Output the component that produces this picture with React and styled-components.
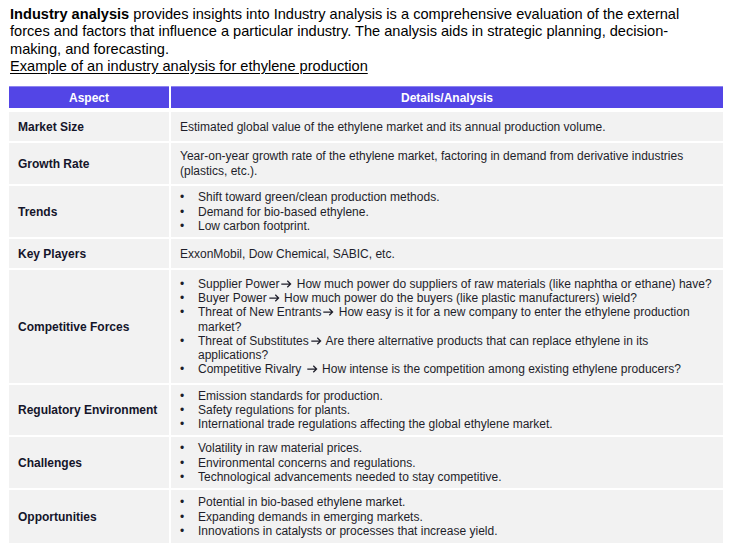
import React from "react";
import styled, { createGlobalStyle } from "styled-components";

const Global = createGlobalStyle`
  html, body { margin: 0; padding: 0; background: #ffffff; }
  body { font-family: "Liberation Sans", Arial, sans-serif; }
`;

const Page = styled.div`
  width: 729px;
  height: 545px;
  padding: 6px 6px 0 9px;
  box-sizing: border-box;
  overflow: hidden;
`;

const Intro = styled.p`
  margin: 0 0 0 1px;
  font-size: 14.6px;
  line-height: 17.3px;
  color: #000;
`;

const Strong = styled.b`
  font-weight: 700;
`;

const Caption = styled.span`
  text-decoration: underline;
  text-underline-offset: 2px;
`;

const Table = styled.div`
  margin-top: 11px;
  width: 714px;
  display: flex;
  flex-direction: column;
  gap: 2px;
`;

const Row = styled.div`
  display: grid;
  grid-template-columns: 160px 552px;
  column-gap: 2px;
  height: ${(p) => p.$h}px;
  margin-bottom: ${(p) => (p.$head ? 2 : 0)}px;
`;

const HeadCell = styled.div`
  background: #5345e6;
  border-top: 1px solid #8e84ef;
  color: #ffffff;
  font-weight: 700;
  font-size: 12px;
  display: flex;
  align-items: center;
  justify-content: center;
`;

const LabelCell = styled.div`
  background: #f2f2f2;
  display: flex;
  align-items: center;
  padding-left: 9px;
  font-size: 12px;
  font-weight: 700;
  color: #15152a;
`;

const BodyCell = styled.div`
  background: #f2f2f2;
  display: flex;
  flex-direction: column;
  justify-content: center;
  padding-left: 9px;
  font-size: 12px;
  line-height: 14.2px;
  color: #1e1e2a;
`;

const Item = styled.div`
  display: flex;
`;

const Dot = styled.span`
  width: 18px;
  flex: none;
`;

const Lines = styled.div`
  display: flex;
  flex-direction: column;
`;

const Text = styled.span`
  white-space: nowrap;
`;

const ArrowSvg = styled.svg`
  width: 11px;
  height: 8px;
  margin: 0 1px 0 2px;
  vertical-align: 0px;
`;

const A = () => (
  <ArrowSvg viewBox="0 0 11 8" aria-hidden="true">
    <path d="M0.3 4 H9.6 M6.3 0.7 L9.6 4 L6.3 7.3" fill="none" stroke="currentColor" strokeWidth="1.25" />
  </ArrowSvg>
);

const rows = [
  { label: "Market Size", h: 29, text: ["Estimated global value of the ethylene market and its annual production volume."] },
  {
    label: "Growth Rate",
    h: 41,
    text: ["Year-on-year growth rate of the ethylene market, factoring in demand from derivative industries", "(plastics, etc.)."],
  },
  {
    label: "Trends",
    h: 51,
    bullets: [["Shift toward green/clean production methods."], ["Demand for bio-based ethylene."], ["Low carbon footprint."]],
  },
  { label: "Key Players", h: 29, text: ["ExxonMobil,  Dow Chemical, SABIC, etc."] },
  {
    label: "Competitive Forces",
    h: 113,
    bullets: [
      [<>Supplier Power<A /> How much power do suppliers of raw materials (like naphtha or ethane) have?</>],
      [<>Buyer Power<A /> How much power do the buyers (like plastic manufacturers) wield?</>],
      [<>Threat of New Entrants<A /> How easy is it for a new company to enter the ethylene production</>, "market?"],
      [<>Threat of Substitutes<A /> Are there alternative products that can replace ethylene in its</>, "applications?"],
      [<>Competitive Rivalry <A /> How intense is the competition among existing ethylene producers?</>],
    ],
  },
  {
    label: "Regulatory  Environment",
    h: 50,
    bullets: [
      ["Emission standards for production."],
      ["Safety regulations for plants."],
      ["International trade regulations affecting the global ethylene market."],
    ],
  },
  {
    label: "Challenges",
    h: 51,
    bullets: [
      ["Volatility in raw material prices."],
      ["Environmental concerns and regulations."],
      ["Technological advancements needed to stay competitive."],
    ],
  },
  {
    label: "Opportunities",
    h: 53,
    bullets: [
      ["Potential in bio-based ethylene market."],
      ["Expanding demands in emerging markets."],
      ["Innovations in catalysts or processes that increase yield."],
    ],
  },
];

export default function App() {
  return (
    <>
      <Global />
      <Page>
        <Intro>
          <Strong>Industry analysis</Strong> provides insights into Industry analysis is a comprehensive evaluation of the external
          <br />
          forces and factors that influence a particular industry. The analysis aids in strategic planning, decision-
          <br />
          making, and forecasting.
          <br />
          <Caption>Example of an industry analysis for ethylene production</Caption>
        </Intro>
        <Table>
          <Row $h={22} $head>
            <HeadCell>Aspect</HeadCell>
            <HeadCell>Details/Analysis</HeadCell>
          </Row>
          {rows.map((r) => (
            <Row key={r.label} $h={r.h}>
              <LabelCell>{r.label}</LabelCell>
              <BodyCell>
                {r.text && r.text.map((l, i) => <Text key={i}>{l}</Text>)}
                {r.bullets &&
                  r.bullets.map((b, i) => (
                    <Item key={i}>
                      <Dot>•</Dot>
                      <Lines>
                        {b.map((l, j) => (
                          <Text key={j}>{l}</Text>
                        ))}
                      </Lines>
                    </Item>
                  ))}
              </BodyCell>
            </Row>
          ))}
        </Table>
      </Page>
    </>
  );
}
